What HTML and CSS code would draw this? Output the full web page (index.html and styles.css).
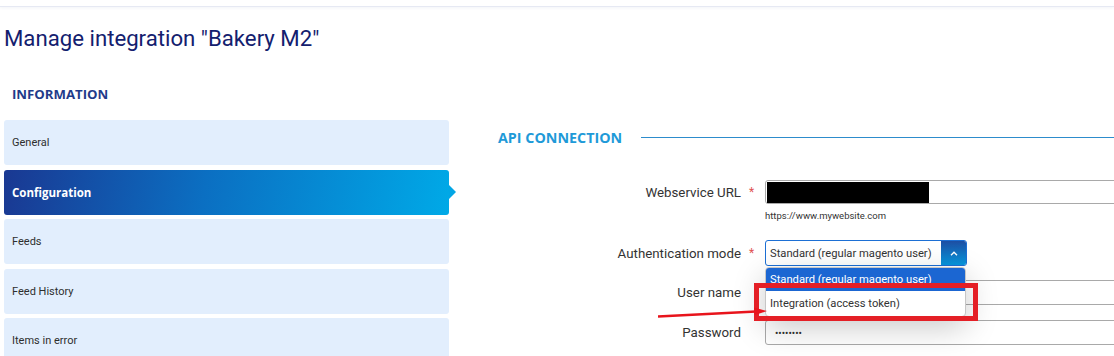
FILE: index.html
```html
<!DOCTYPE html>
<html lang="en">
<head>
  <meta charset="UTF-8" />
  <meta name="viewport" content="width=device-width, initial-scale=1.0" />
  <title>Manage integration - Bakery M2</title>
  <link rel="stylesheet" href="styles.css">
</head>
<body>
  <header class="topbar"></header>

  <h1 class="page-title">Manage integration "Bakery M2"</h1>

  <div class="layout">
    <aside class="side">
      <h2 class="side-title">INFORMATION</h2>
      <nav class="side-nav">
        <a class="nav-item" href="#">General</a>
        <a class="nav-item active" href="#">Configuration</a>
        <a class="nav-item" href="#">Feeds</a>
        <a class="nav-item" href="#">Feed History</a>
        <a class="nav-item" href="#">Items in error</a>
      </nav>
    </aside>

    <main class="content">
      <div class="legend">
        <span>API CONNECTION</span>
        <span class="legend-line"></span>
      </div>

      <div class="row row-url">
        <label class="label">Webservice URL</label>
        <span class="req">*</span>
        <div class="field field-url"><span class="redact"></span></div>
      </div>
      <div class="row row-hint">
        <span></span><span></span>
        <div class="hint">https://www.mywebsite.com</div>
      </div>

      <div class="row row-auth">
        <label class="label">Authentication mode</label>
        <span class="req">*</span>
        <div class="select-wrap">
          <div class="select">
            <span class="select-value">Standard (regular magento user)</span>
            <span class="select-btn">
              <svg width="8" height="5" viewBox="0 0 8 5"><polyline points="1,4.2 4,1.2 7,4.2" fill="none" stroke="#fff" stroke-width="1.3"/></svg>
            </span>
          </div>
          <ul class="options">
            <li class="option selected">Standard (regular magento user)</li>
            <li class="option">Integration (access token)</li>
          </ul>
        </div>
      </div>

      <div class="row row-user">
        <label class="label">User name</label>
        <span></span>
        <div class="field"></div>
      </div>

      <div class="row row-pass">
        <label class="label">Password</label>
        <span></span>
        <div class="field field-pass">&bull;&bull;&bull;&bull;&bull;&bull;&bull;&bull;</div>
      </div>
    </main>
  </div>

  <!-- screenshot annotation -->
  <div class="mark-box"></div>
  <svg class="mark-arrow" width="1114" height="356" viewBox="0 0 1114 356">
    <line x1="658" y1="316.5" x2="756" y2="311.5" stroke="#e8141c" stroke-width="2.4"/>
    <polygon points="754,307.5 767,311 755,315" fill="#e8141c"/>
  </svg>
</body>
</html>
```

FILE: styles.css
```css
body { margin: 0; font-family: Roboto, "Liberation Sans", sans-serif; color: #333; background: #fff; overflow: hidden; position: relative; height: 356px; }

.topbar { height: 6px; border-bottom: 1px solid #e6e9f3; box-shadow: 0 1px 3px rgba(40, 60, 140, 0.06); }

.page-title { margin: 0; padding: 17px 4px 0; font-size: 22.2px; line-height: 28px; font-weight: 400; color: #13206e; }

.layout { display: flex; }

.side { width: 445px; margin-left: 4px; flex: none; }
.side-title { margin: 34px 0 18px 8px; font-family: "Open Sans", sans-serif; font-size: 13.2px; line-height: 16px; font-weight: 700; color: #1f3b8a; }
.side-nav { display: flex; flex-direction: column; gap: 4.5px; }
.nav-item { position: relative; display: flex; align-items: center; height: 45px; padding-left: 8px; background: #e2eefd; border-radius: 3px; font-size: 11px; color: #2e2e2e; text-decoration: none; }
.nav-item.active { background: linear-gradient(100deg, #1a3892 0%, #0b6fc2 45%, #00a9e7 100%); color: #fff; font-family: "Open Sans", sans-serif; font-weight: 700; font-size: 11.5px; }
.nav-item.active::after { content: ""; position: absolute; right: -7px; top: 50%; margin-top: -7px; border-left: 7px solid #02a6e5; border-top: 7px solid transparent; border-bottom: 7px solid transparent; }

.content { flex: 1; min-width: 0; margin-left: 49px; }

.legend { display: flex; align-items: center; margin-top: 75px; height: 20px; font-family: "Open Sans", sans-serif; font-size: 14.3px; font-weight: 700; color: #1f9ad8; }
.legend-line { flex: 1; height: 1px; margin-left: 19px; background: #2d8ccc; }

.row { display: grid; grid-template-columns: 243px 24px 400px; align-items: center; }
.row-url { margin-top: 33px; }
.row-hint { margin-top: 6px; }
.row-auth { margin-top: 18px; }
.row-user { margin-top: 14px; }
.row-pass { margin-top: 15px; }

.label { text-align: right; font-size: 13.3px; color: #333; }
.req { padding-left: 8px; font-size: 12px; color: #e05252; }

.field { box-sizing: border-box; height: 25px; border: 1px solid #a9a9a9; border-radius: 3px; background: #fff; }
.field-url { height: 24px; padding: 0 1px; display: flex; align-items: center; }
.redact { display: block; width: 162px; height: 21px; background: #000; }
.field-pass { display: flex; align-items: center; padding: 2px 0 0 9px; font-size: 10px; color: #333; }
.hint { font-size: 9.5px; line-height: 12px; color: #333; }

.select-wrap { position: relative; width: 202px; }
.select { box-sizing: border-box; display: flex; height: 26px; border: 1px solid #1c6fd4; border-radius: 3px; overflow: hidden; background: #fff; }
.select-value { flex: 1; display: flex; align-items: center; padding-left: 4px; font-size: 11.2px; color: #333; white-space: nowrap; }
.select-btn { width: 25px; display: flex; align-items: center; justify-content: center; background: linear-gradient(to bottom, #1d4ea3, #0697de); }

.options { position: absolute; left: 0; top: 27px; width: 201px; margin: 0; padding: 0; list-style: none; box-sizing: border-box; border: 1px solid #c6c6c6; border-radius: 4px; overflow: hidden; background: #fff; box-shadow: 0 10px 32px rgba(0, 0, 0, 0.22); z-index: 2; }
.option { height: 23px; display: flex; align-items: center; padding-left: 4px; font-size: 11.2px; color: #333; white-space: nowrap; }
.option + .option { height: 25px; }
.option.selected { background: #1b66d2; color: #fff; }

.mark-box { position: absolute; left: 754px; top: 283px; width: 224px; height: 38px; box-sizing: border-box; border: 5px solid #e41f26; z-index: 3; }
.mark-arrow { position: absolute; left: 0; top: 0; z-index: 4; pointer-events: none; }
```
